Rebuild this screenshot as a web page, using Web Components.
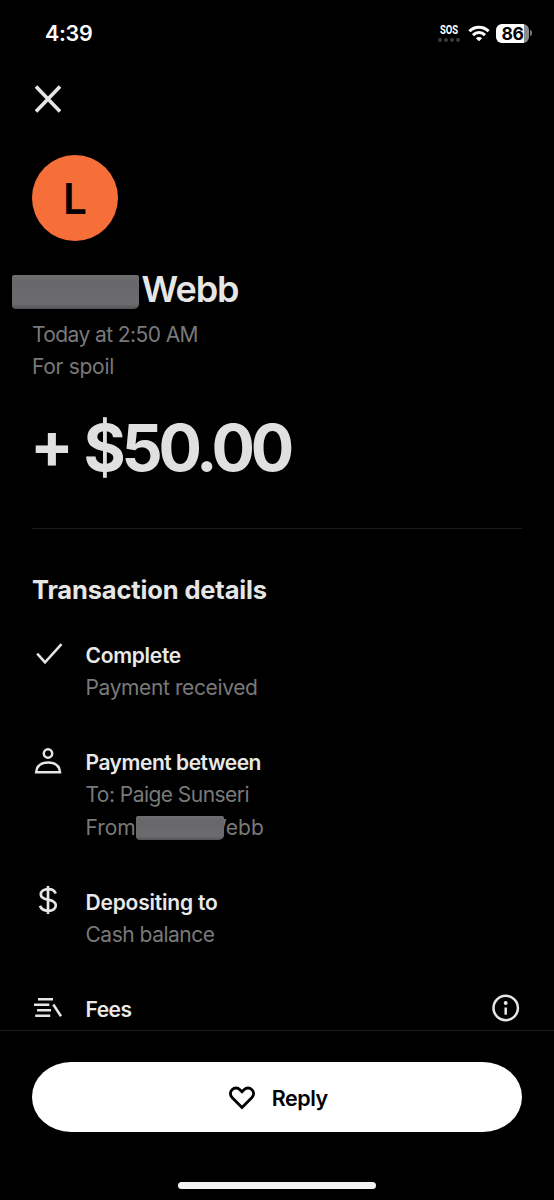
<!DOCTYPE html>
<html lang="en">
<head>
<meta charset="utf-8">
<title>Transaction details</title>
<style>
html,body{margin:0;background:#000}
body{font-family:Inter,"Liberation Sans",sans-serif;color:#e6e6e6;height:1200px;overflow:hidden}
</style>
</head>
<body>
<payment-screen></payment-screen>
<script>
const define = (name, html, setup) => {
  const tpl = document.createElement('template');
  tpl.innerHTML = html;
  customElements.define(name, class extends HTMLElement {
    constructor() {
      super();
      this.attachShadow({mode: 'open'}).append(tpl.content.cloneNode(true));
    }
    connectedCallback() { if (setup) setup(this); }
  });
};

/* A single line of text, tracked so that its advance equals the "w" attribute. */
define('fit-text', `<style>
:host{display:inline-block;white-space:nowrap}
</style><slot></slot>`, el => {
  const target = parseFloat(el.getAttribute('w'));
  const n = el.textContent.length;
  if (target && n) {
    el.style.letterSpacing = '0px';
    const natural = el.getBoundingClientRect().width;
    el.style.letterSpacing = ((target - natural) / n).toFixed(3) + 'px';
  }
});

define('redaction-bar', `<style>
:host{display:block;position:absolute;border-radius:2px 2px 5px 4px;box-sizing:border-box;
background:linear-gradient(#6f6f71,#68686a 20%,#6c6c6e 85%,#535358)}
</style>`);

define('status-bar', `<style>
:host{display:flex;align-items:center;justify-content:space-between;height:66px;padding:0 22px 0 45px;box-sizing:border-box;color:#fff}
.time{font-size:21.5px;font-weight:600;line-height:66px}
.right{display:flex;align-items:center}
.sos{width:22px;margin-right:8px;display:flex;flex-direction:column;align-items:center;gap:3px;padding-top:1px}
.sos b{font:700 12.5px/10px Roboto,sans-serif;transform:scaleX(.76)}
.dots{display:flex;gap:2px}.dots i{width:4px;height:4px;border-radius:50%;background:#3a3a3a}
.bat{display:flex;align-items:center;margin-left:6px}
.cell{width:33px;height:19px;border-radius:6px;background:linear-gradient(90deg,#fff 84%,#8b8b8b 84%);color:#000;font-size:17.5px;font-weight:700;line-height:19px;text-align:center}
.nub{width:2px;height:6px;margin-left:1px;border-radius:0 2px 2px 0;background:#777}
svg{display:block}
</style>
<div class="time"><fit-text w="47.5">4:39</fit-text></div>
<div class="right">
<div class="sos"><b>SOS</b><div class="dots"><i></i><i></i><i></i><i></i></div></div>
<svg width="22" height="17" viewBox="0 0 22 17" fill="none" stroke="#fff" stroke-width="3"><path d="M1.4 6.300a13.600 13.600 0 0 1 19.200 0M5 10.100a8.500 8.500 0 0 1 12 0"/><path d="M11 16.300 7.900 13.200a4.400 4.400 0 0 1 6.200 0Z" fill="#fff" stroke="none"/></svg>
<div class="bat"><div class="cell"><fit-text w="22">86</fit-text></div><div class="nub"></div></div>
</div>`);

const icons = {
  check: '<path d="M5.2 14.700 13 23.300 29.500 5.200"/>',
  person: '<circle cx="16" cy="6.500" r="4.200"/><path d="M4.200 25.200c.6-6.400 5.300-9.600 11.900-9.600s11.300 3.200 11.900 9.600Z"/>',
  dollar: '<path d="M16 2v28M23.700 9.500C22.600 6.700 19.900 5.200 16.400 5.200c-4.700 0-7.600 2.100-7.600 5.200 0 3.500 3.100 4.400 7.200 5.200 4.400.9 7.800 2 7.800 5.700 0 3.400-3 5.500-7.500 5.500-4.300 0-7.200-1.800-8.300-5"/>',
  fees: '<path d="M6 5.300h15M2 10.800h15.300M5 16.300h14M3.200 21.800h15M21.300 10.500l7.700 11.700"/>',
  info: '<circle cx="15.700" cy="14" r="12.200"/><path d="M15.700 13.500v7.200"/><circle cx="15.700" cy="9" r="2" fill="currentColor" stroke="none"/>',
  heart: '<path d="M16 26.500 6.040 16.560A5.600 5.600 0 0 1 13.960 8.640L16 10.700 18.040 8.640A5.600 5.600 0 0 1 25.960 16.560Z"/>',
  close: '<path d="M4 3.500 28 28.500M28 3.500 4 28.500"/>'
};
define('line-icon', `<style>
:host{display:block;width:32px;height:32px;flex:none}
svg{display:block}
</style><svg width="32" height="32" viewBox="0 0 32 32" fill="none" stroke="currentColor" stroke-width="2.500"></svg>`, el => {
  const svg = el.shadowRoot.querySelector('svg');
  svg.innerHTML = icons[el.getAttribute('name')];
  if (el.hasAttribute('weight')) svg.setAttribute('stroke-width', el.getAttribute('weight'));
});

define('user-avatar', `<style>
:host{display:flex;align-items:center;justify-content:center;width:86px;height:86px;border-radius:50%;background:#f66f39;color:#000;font-size:42.500px;font-weight:600}
</style><slot></slot>`);

define('detail-row', `<style>
:host{display:grid;grid-template-columns:32px 1fr 32px;column-gap:21.500px;line-height:32.200px;font-size:21px}
.icon{margin-top:var(--icon-shift,0px)}
.title{font-weight:600;color:#e9e9e9}
.lines{color:#797979}
</style>
<div class="icon"><slot name="icon"></slot></div>
<div><div class="title"><slot name="title"></slot></div><div class="lines"><slot></slot></div></div>
<div><slot name="action"></slot></div>`);

define('reply-button', `<style>
:host{display:flex;align-items:center;justify-content:center;height:69.500px;border-radius:39px/35px;background:#fff;color:#000;font-size:21.500px;font-weight:600;gap:13.500px}
.label{padding-top:1.500px}
</style><line-icon name="heart" weight="2.800"></line-icon><div class="label"><slot></slot></div>`);

define('payment-screen', `<style>
:host{display:flex;flex-direction:column;height:1200px;background:#000}
main{flex:1;min-height:0;overflow:hidden;padding:17px 32px 0;box-sizing:border-box}
user-avatar{margin-top:40px}
.name{position:relative;margin:26px 0 0;height:44px;padding-left:109.500px;font-size:36px;line-height:44px;font-weight:600}
.name redaction-bar{left:-20px;top:8px;width:127px;height:33.500px}
.meta{margin-top:8px;font-size:21px;line-height:32px;color:#797979}
.amount{display:flex;height:80px;margin:25px 0 0 -2px;font-size:64.500px;line-height:80px;font-weight:700;color:#e0e0e0}
.plus{width:53.500px;margin-top:-3px}
hr{margin:39.500px 0 0;border:0;height:1px;background:#1d1d1d}
h2{margin:44px 0 0;font-size:25.500px;line-height:34px;font-weight:700;color:#e6e6e6}
.rows{display:flex;flex-direction:column;gap:42.800px;margin-top:33.500px}
.from{position:relative;display:flex}
.from redaction-bar{left:50.500px;top:4.500px;width:87.500px;height:23.500px}
.webb{margin-left:70.500px}
footer{height:170px;box-sizing:border-box;border-top:1px solid #1c1c1c;padding:31px 32px 0}
.home{width:198px;height:7px;border-radius:4px;background:#f3f3f3;margin:50px auto 0}
</style>
<status-bar></status-bar>
<main>
<line-icon name="close" weight="3.600"></line-icon>
<user-avatar>L</user-avatar>
<div class="name"><fit-text w="97">Webb</fit-text><redaction-bar></redaction-bar></div>
<div class="meta"><div><fit-text w="166">Today at 2:50 AM</fit-text></div><div><fit-text w="82">For spoil</fit-text></div></div>
<div class="amount"><span class="plus">+</span><fit-text w="206.500">$50.00</fit-text></div>
<hr>
<h2><fit-text w="235">Transaction details</fit-text></h2>
<div class="rows">
<detail-row style="--icon-shift:-1px"><line-icon slot="icon" name="check"></line-icon><fit-text slot="title" w="95.500">Complete</fit-text><fit-text w="172">Payment received</fit-text></detail-row>
<detail-row><line-icon slot="icon" name="person"></line-icon><fit-text slot="title" w="175.500">Payment between</fit-text><div><fit-text w="163.500">To: Paige Sunseri</fit-text></div><div class="from"><fit-text w="50">From</fit-text><fit-text class="webb" w="58">Webb</fit-text><redaction-bar></redaction-bar></div></detail-row>
<detail-row style="--icon-shift:-2.500px"><line-icon slot="icon" name="dollar" weight="2.700"></line-icon><fit-text slot="title" w="132">Depositing to</fit-text><fit-text w="129">Cash balance</fit-text></detail-row>
<detail-row><line-icon slot="icon" name="fees"></line-icon><fit-text slot="title" w="46">Fees</fit-text><line-icon slot="action" name="info"></line-icon></detail-row>
</div>
</main>
<footer><reply-button><fit-text w="56">Reply</fit-text></reply-button><div class="home"></div></footer>`);
</script>
</body>
</html>
